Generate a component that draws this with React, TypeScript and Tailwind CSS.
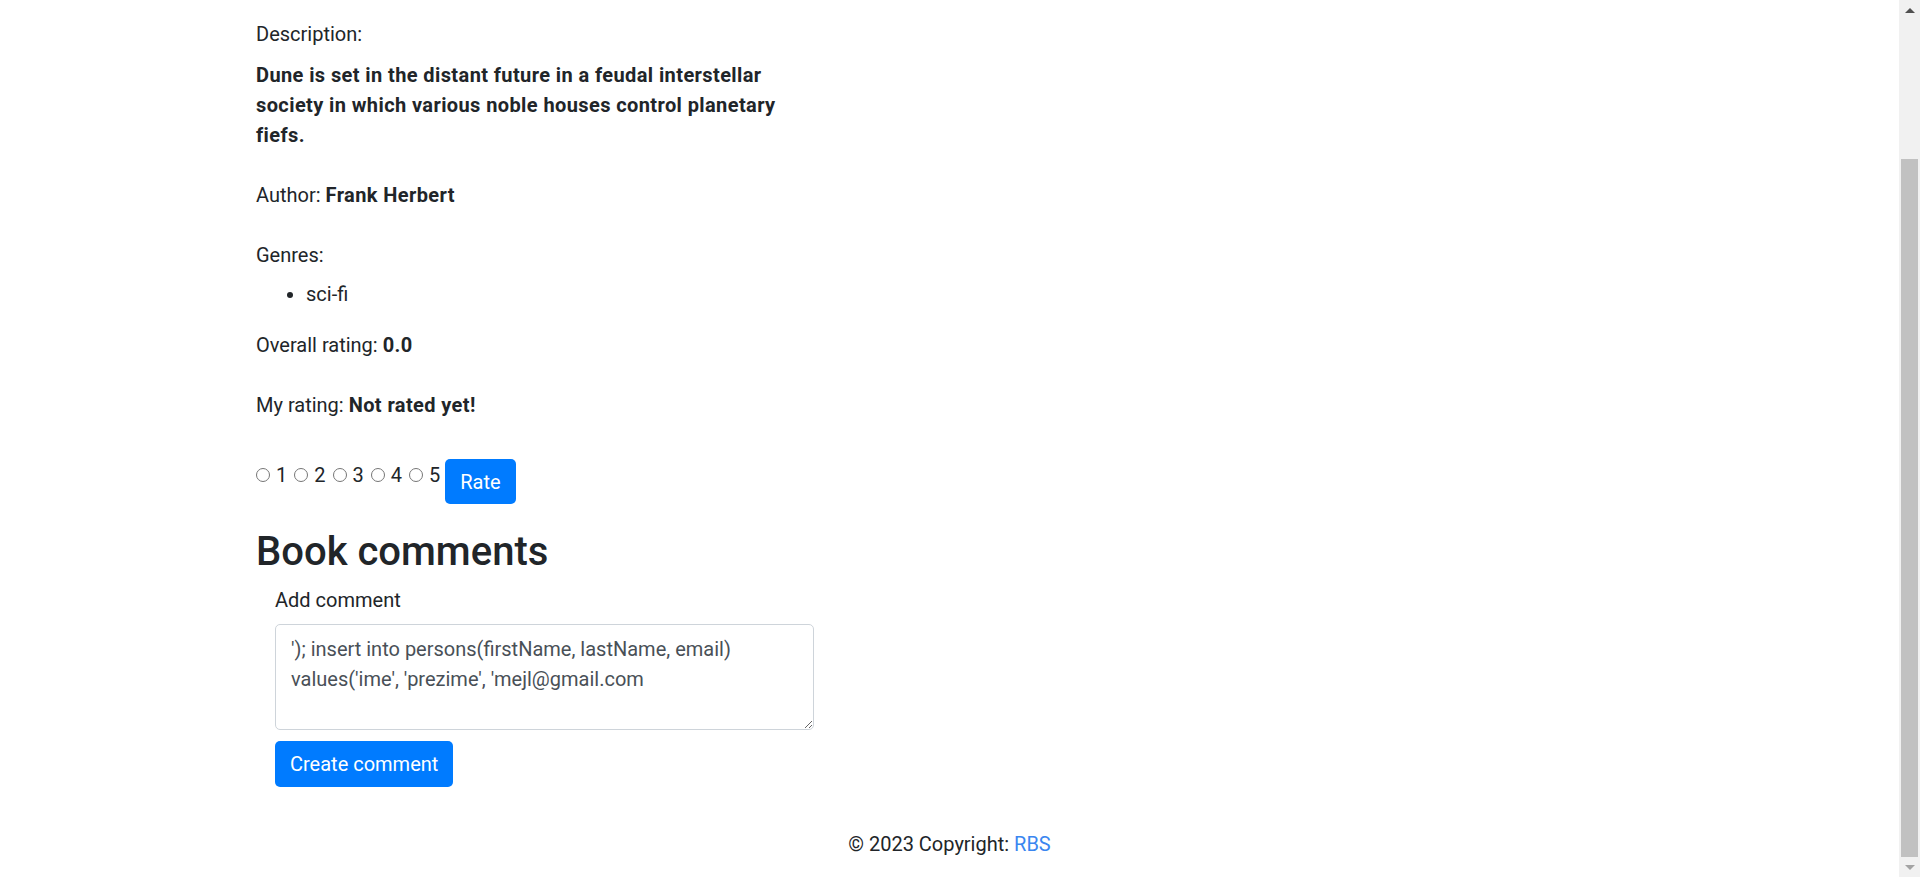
export default function App() {
  return (
    <div className="flex h-screen overflow-hidden bg-white text-[#212529] font-['Roboto',sans-serif] text-[20px] leading-[30px]">
      <div className="flex-1 flex flex-col">
        <main className="w-[1387px] mx-auto pt-[19px]">
          {/* Book details */}
          <div className="w-[556px]">
            <p className="mb-[11px]">Description:</p>
            <p className="font-bold tracking-[0.4px] mb-[30px]">
              Dune is set in the distant future in a feudal interstellar
              <br />
              society in which various noble houses control planetary
              <br />
              fiefs.
            </p>
            <p className="mb-[30px]">
              Author: <b className="tracking-[0.4px]">Frank Herbert</b>
            </p>
            <p className="mb-[9px]">Genres:</p>
            <ul className="list-disc pl-[50px] mb-[21px]">
              <li>sci-fi</li>
            </ul>
            <p className="mb-[30px]">
              Overall rating: <b className="tracking-[0.4px]">0.0</b>
            </p>
            <p className="mb-[39px]">
              My rating: <b className="tracking-[0.4px]">Not rated yet!</b>
            </p>
          </div>

          {/* Rating form */}
          <div className="flex items-start">
            <div className="flex items-center mt-[1px] h-[30px]">
              {[1, 2, 3, 4, 5].map((n) => (
                <label key={n} className="flex items-center mr-[7px] last:mr-[5px]">
                  <input type="radio" name="rating" value={n} className="w-[14px] h-[14px] m-0 mr-[6px]" />
                  {n}
                </label>
              ))}
            </div>
            <button className="h-[45px] px-[15px] bg-[#007bff] text-white rounded-[5px]">Rate</button>
          </div>

          <h2 className="text-[40px] leading-[48px] font-medium mt-[24px]">Book comments</h2>

          {/* Comment form */}
          <div className="pl-[19px] w-[558px]">
            <label className="block mt-[9px] mb-[9px]">Add comment</label>
            <textarea
              rows={3}
              className="block w-full h-[106px] border border-[#ced4da] rounded-[5px] px-[15px] py-[9px] text-[#495057] outline-none"
              defaultValue={"'); insert into persons(firstName, lastName, email) values('ime', 'prezime', 'mejl@gmail.com"}
            />
            <button className="mt-[11px] h-[46px] px-[15px] bg-[#007bff] text-white rounded-[5px]">Create comment</button>
          </div>
        </main>

        <footer className="mt-auto pb-[18px] text-center">
          © 2023 Copyright: <a className="text-[#3a86f0]">RBS</a>
        </footer>
      </div>

      {/* Scrollbar */}
      <div className="w-[21px] bg-[#f1f1f1] flex flex-col items-center">
        <div className="h-[21px] flex items-center justify-center">
          <div className="w-0 h-0 border-l-[5px] border-r-[5px] border-b-[5px] border-l-transparent border-r-transparent border-b-[#505050]" />
        </div>
        <div className="h-[138px]" />
        <div className="w-[17px] h-[698px] bg-[#c1c1c1]" />
        <div className="flex-1 flex items-center justify-center">
          <div className="w-0 h-0 border-l-[5px] border-r-[5px] border-t-[5px] border-l-transparent border-r-transparent border-t-[#a3a3a3]" />
        </div>
      </div>
    </div>
  );
}
